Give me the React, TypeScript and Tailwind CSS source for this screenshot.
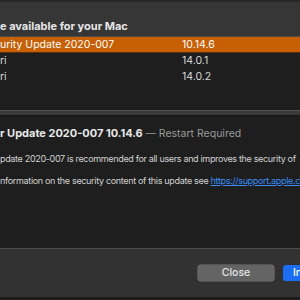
export default function App() {
  const rows = [
    { name: "urity Update 2020-007", ver: "10.14.6", selected: true },
    { name: "ri", ver: "14.0.1", selected: false },
    { name: "ri", ver: "14.0.2", selected: false },
  ];

  return (
    <div className="w-[300px] h-[300px] overflow-hidden flex flex-col bg-[#1e1e1e] font-['Inter','Noto_Sans',sans-serif] text-[#dedede]">
      {/* window top edge */}
      <div className="h-[2px] flex-none bg-[#262626]" />

      {/* list header */}
      <div className="h-[35px] flex-none bg-[#363636] pt-[16px] border-b border-[#4c4c4c]">
        <p className="text-[11px] leading-[16px] font-bold text-[#e6e6e6] whitespace-nowrap">
          e available for your Mac
        </p>
      </div>

      {/* update list */}
      <div className="h-[73px] flex-none flex flex-col">
        {rows.map((r, i) => (
          <div
            key={i}
            className={`h-[16px] flex-none flex items-center text-[10.5px] whitespace-nowrap ${
              r.selected ? "bg-[#c76005] text-white border-b border-[#5c2e05]" : "text-[#d8d8d8]"
            }`}
          >
            <span className="w-[182px] flex-none">{r.name}</span>
            <span>{r.ver}</span>
          </div>
        ))}
      </div>

      {/* splitter */}
      <div className="h-[6px] flex-none bg-[#3a3a3a] border-t border-[#525252] border-b border-b-[#161616]" />

      {/* details */}
      <div className="flex-1 pt-[9px] whitespace-nowrap overflow-hidden">
        <p className="text-[11px] leading-[16px] font-bold text-[#e8e8e8]">
          r Update 2020-007 10.14.6{" "}
          <span className="font-normal text-[10.5px] text-[#9a9a9a]">— Restart Required</span>
        </p>
        <p className="mt-[9px] text-[9px] tracking-[-0.33px] leading-[16px] text-[#d2d2d2]">
          pdate 2020-007 is recommended for all users and improves the security of
        </p>
        <p className="mt-[6px] text-[9px] tracking-[-0.33px] leading-[16px] text-[#d2d2d2]">
          nformation on the security content of this update see{" "}
          <span className="text-[#3b8cf5] underline">https://support.apple.com</span>
        </p>
      </div>

      {/* button bar */}
      <div className="h-[49px] flex-none bg-[#333232] border-t border-[#4a4a4a] flex items-center gap-[9px] pl-[198px] overflow-hidden">
        <button className="w-[76px] h-[16px] flex-none rounded-[3px] bg-[#646464] text-[10.5px] font-medium leading-[16px] text-[#e4e4e4] shadow-[0_0_0_0.5px_#777]">
          Close
        </button>
        <button className="w-[60px] h-[16px] flex-none rounded-[3px] bg-[#1b6ef3] text-[10.5px] font-medium leading-[16px] text-white text-left pl-[10px] whitespace-nowrap">
          Install
        </button>
      </div>

      <div className="h-[3px] flex-none bg-[#1c1c1c]" />
    </div>
  );
}
